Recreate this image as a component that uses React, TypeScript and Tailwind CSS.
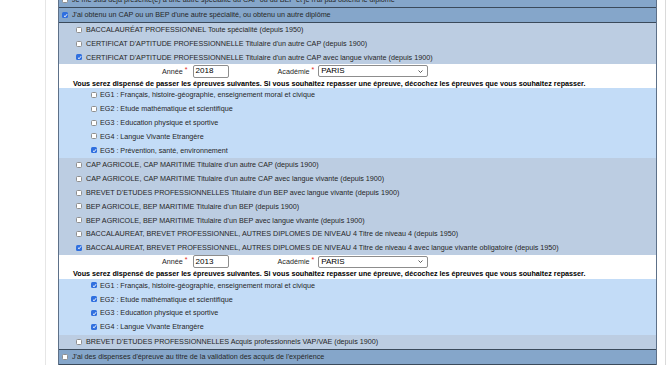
import React from 'react';

const Box: React.FC<{ checked?: boolean }> = ({ checked }) =>
  checked ? (
    <span className="w-[6px] h-[6px] shrink-0 rounded-[1.5px] bg-[#2f6fdf] flex items-center justify-center">
      <svg viewBox="0 0 10 10" className="w-[5px] h-[5px]">
        <path d="M2 5.5 L4.2 7.6 L8.2 2.4" stroke="white" strokeWidth="1.9" fill="none" />
      </svg>
    </span>
  ) : (
    <span className="w-[6px] h-[6px] shrink-0 rounded-[1.5px] bg-white border border-[#8f8f8f]" />
  );

const HeaderRow: React.FC<{ label: string; checked?: boolean }> = ({ label, checked }) => (
  <div className="h-[15px] flex items-center pl-[3px] gap-[4px] bg-[#85a6ca] border-b border-[#3b4a5b] whitespace-nowrap">
    <Box checked={checked} />
    <span>{label}</span>
  </div>
);

const SubRow: React.FC<{ label: string; checked?: boolean }> = ({ label, checked }) => (
  <div className="h-[13.8px] flex items-center pl-[17px] gap-[4px] whitespace-nowrap">
    <Box checked={checked} />
    <span>{label}</span>
  </div>
);

const EgRow: React.FC<{ label: string; checked?: boolean }> = ({ label, checked }) => (
  <div className="h-[13.8px] flex items-center pl-[32px] gap-[3px] whitespace-nowrap">
    <Box checked={checked} />
    <span>{label}</span>
  </div>
);

const Req = () => <span className="text-[#e0241b] ml-[2px] -mt-[4px] text-[7px]">*</span>;

const Details: React.FC<{ year: string; eg: { label: string; checked: boolean }[] }> = ({ year, eg }) => (
  <>
    <div className="bg-white">
      <div className="h-[14px] flex items-center pl-[103px] whitespace-nowrap">
        <span>Année</span>
        <Req />
        <div className="ml-[5px] w-[36px] h-[13px] border border-[#8d8d8d] rounded-[2px] flex items-center pl-[2px] text-[8px] text-black">
          {year}
        </div>
        <span className="ml-[49px]">Académie</span>
        <Req />
        <div className="ml-[4px] w-[110px] h-[12px] border border-[#8d8d8d] rounded-[2px] flex items-center justify-between pl-[2px] pr-[4px] text-[8px] text-black">
          <span>PARIS</span>
          <svg viewBox="0 0 10 6" className="w-[5px] h-[3px]">
            <path d="M1 1 L5 5 L9 1" stroke="#333" strokeWidth="1.6" fill="none" />
          </svg>
        </div>
      </div>
      <div className="h-[9.8px] flex items-end pb-[1px] pl-[14px] font-bold text-black whitespace-nowrap">
        Vous serez dispensé de passer les épreuves suivantes. Si vous souhaitez repasser une épreuve, décochez les épreuves que vous souhaitez repasser.
      </div>
    </div>
    <div className="bg-[#c3dcf7] pb-[1px]">
      {eg.map((e) => (
        <EgRow key={e.label} label={e.label} checked={e.checked} />
      ))}
    </div>
  </>
);

export default function App() {
  return (
    <div className="w-[670px] h-[365px] overflow-hidden bg-white flex font-['Liberation_Sans',Arial,sans-serif] text-[7.2px] text-[#262626] leading-none">
      <div className="w-[46px] shrink-0 border-r border-[#e6e6e6]" />
      <div className="w-[620px] shrink-0 border-r border-[#dadada] pl-[12px] pr-[8px]">
        <div className="-mt-[7px] border-x border-[#5d7088]">
          <HeaderRow label="Je me suis déjà présenté(e) à une autre spécialité du CAP ou du BEP et je n'ai pas obtenu le diplôme" />
          <HeaderRow label="J'ai obtenu un CAP ou un BEP d'une autre spécialité, ou obtenu un autre diplôme" checked />
          <div className="bg-[#bccde2] border-b border-[#3b4a5b]">
            <SubRow label="BACCALAURÉAT PROFESSIONNEL Toute spécialité (depuis 1950)" />
            <SubRow label="CERTIFICAT D'APTITUDE PROFESSIONNELLE Titulaire d'un autre CAP (depuis 1900)" />
            <SubRow label="CERTIFICAT D'APTITUDE PROFESSIONNELLE Titulaire d'un autre CAP avec langue vivante (depuis 1900)" checked />
            <Details
              year="2018"
              eg={[
                { label: 'EG1 : Français, histoire-géographie, enseignement moral et civique', checked: false },
                { label: 'EG2 : Etude mathématique et scientifique', checked: false },
                { label: 'EG3 : Education physique et sportive', checked: false },
                { label: 'EG4 : Langue Vivante Etrangère', checked: false },
                { label: 'EG5 : Prévention, santé, environnement', checked: true },
              ]}
            />
            <SubRow label="CAP AGRICOLE, CAP MARITIME Titulaire d'un autre CAP (depuis 1900)" />
            <SubRow label="CAP AGRICOLE, CAP MARITIME Titulaire d'un autre CAP avec langue vivante (depuis 1900)" />
            <SubRow label="BREVET D'ETUDES PROFESSIONNELLES Titulaire d'un BEP avec langue vivante (depuis 1900)" />
            <SubRow label="BEP AGRICOLE, BEP MARITIME Titulaire d'un BEP (depuis 1900)" />
            <SubRow label="BEP AGRICOLE, BEP MARITIME Titulaire d'un BEP avec langue vivante (depuis 1900)" />
            <SubRow label="BACCALAUREAT, BREVET PROFESSIONNEL, AUTRES DIPLOMES DE NIVEAU 4 Titre de niveau 4 (depuis 1950)" />
            <SubRow label="BACCALAUREAT, BREVET PROFESSIONNEL, AUTRES DIPLOMES DE NIVEAU 4 Titre de niveau 4 avec langue vivante obligatoire (depuis 1950)" checked />
            <Details
              year="2013"
              eg={[
                { label: 'EG1 : Français, histoire-géographie, enseignement moral et civique', checked: true },
                { label: 'EG2 : Etude mathématique et scientifique', checked: true },
                { label: 'EG3 : Education physique et sportive', checked: true },
                { label: 'EG4 : Langue Vivante Etrangère', checked: true },
              ]}
            />
            <SubRow label="BREVET D'ETUDES PROFESSIONNELLES Acquis professionnels VAP/VAE (depuis 1900)" />
          </div>
          <HeaderRow label="J'ai des dispenses d'épreuve au titre de la validation des acquis de l'expérience" />
        </div>
      </div>
    </div>
  );
}
